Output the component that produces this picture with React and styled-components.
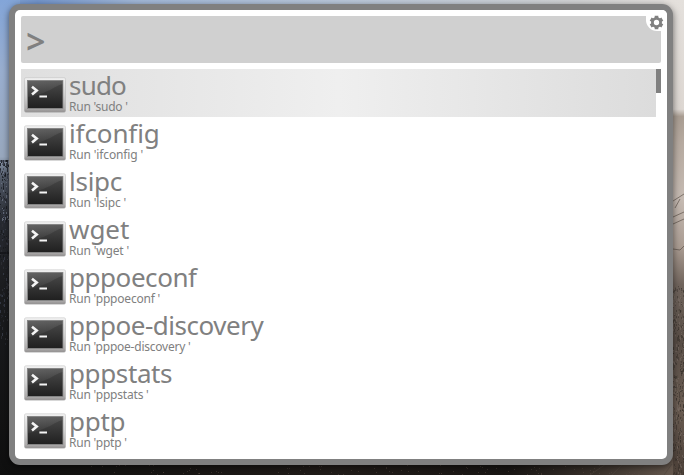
import React from "react";
import styled, { createGlobalStyle } from "styled-components";

const Global = createGlobalStyle`
  * { box-sizing: border-box; }
  body { margin: 0; overflow: hidden; font-family: "Noto Sans", sans-serif; color: #808080; }
`;

const Desktop = styled.main`
  position: relative;
  width: 684px;
  height: 475px;
  padding: 4px 11px 10px 9px;
  overflow: hidden;
  background: #151413;
`;

const Wallpaper = styled.svg`
  position: absolute;
  inset: 0;
`;

const Launcher = styled.section`
  position: relative;
  height: 461px;
  padding: 6px;
  border-radius: 11px;
  background: #808080;
  box-shadow: 0 2px 7px rgba(0, 0, 0, 0.55);
`;

const Inner = styled.div`
  height: 449px;
  padding: 6px;
  border-radius: 5px;
  background: #fff;
`;

const Prompt = styled.div`
  height: 47px;
  padding-left: 5px;
  border-radius: 2px;
  background: #d0d0d0;
  font-size: 34px;
  font-weight: 600;
  line-height: 51px;
`;

const Settings = styled.button`
  position: absolute;
  top: 6px;
  right: 6px;
  width: 21px;
  height: 21px;
  padding: 0;
  border: 0;
  border-radius: 5px 5px 5px 11px;
  background: #fff;

  svg {
    display: block;
    margin: 3px 0 0 3px;
  }
`;

const Results = styled.div`
  display: flex;
  margin-top: 6px;
`;

const List = styled.ul`
  flex: 1;
  margin: 0;
  padding: 0;
  list-style: none;
`;

const Thumb = styled.div`
  width: 5px;
  height: 24px;
  background: #808080;
`;

const Row = styled.li`
  display: flex;
  height: 48px;
  padding-left: 3px;
  background: ${(p) => (p.$active ? "linear-gradient(90deg, #dfdfdf, #efefef 50%, #dcdcdc)" : "transparent")};
`;

const Icon = styled.svg`
  flex: none;
  width: 42px;
  height: 37px;
  margin: 8px 3px 0 0;
`;

const IconDefs = styled.svg`
  display: block;
  width: 0;
  height: 0;
`;

const Labels = styled.div`
  white-space: pre;
`;

const Title = styled.div`
  height: 31px;
  font-size: 26px;
  line-height: 33px;
  letter-spacing: ${(p) => p.$track}px;
`;

const Subtitle = styled.div`
  font-size: 12px;
  line-height: 14px;
  letter-spacing: ${(p) => p.$track}px;
`;

const commands = [
  { name: "sudo", track: -0.8, subTrack: -0.25 },
  { name: "ifconfig", track: -0.12, subTrack: -0.15 },
  { name: "lsipc", track: -0.25, subTrack: -0.17 },
  { name: "wget", track: -0.05, subTrack: -0.17 },
  { name: "pppoeconf", track: -0.45, subTrack: -0.2 },
  { name: "pppoe-discovery", track: -0.48, subTrack: -0.23 },
  { name: "pppstats", track: -0.38, subTrack: -0.2 },
  { name: "pptp", track: -0.3, subTrack: -0.2 },
];

// Repeatable pseudo-random values for the foliage speckle.
const noise = (n) => {
  const v = Math.sin(n * 127.1) * 43758.5453;
  return v - Math.floor(v);
};

const range = (n) => Array.from({ length: n }, (_, i) => i);

const leftTints = ["#737b8c", "#3c4250", "#17191e", "#252830"];
const rightTints = ["#857970", "#332d29", "#51483f", "#28231f"];

function Backdrop() {
  return (
    <Wallpaper width="684" height="475" viewBox="0 0 684 475" aria-hidden="true">
      <defs>
        <linearGradient id="sky">
          <stop offset="0" stopColor="#83a5d8" />
          <stop offset="0.055" stopColor="#7395cc" />
          <stop offset="0.2" stopColor="#a2b8d8" />
          <stop offset="0.5" stopColor="#bac8da" />
          <stop offset="0.85" stopColor="#d3d4d5" />
          <stop offset="1" stopColor="#e5e1dd" />
        </linearGradient>
        <linearGradient id="left" x2="0" y2="1">
          <stop offset="0" stopColor="#83a5d8" />
          <stop offset="0.15" stopColor="#9aafd0" />
          <stop offset="0.33" stopColor="#99a9bf" />
          <stop offset="0.37" stopColor="#555d6b" />
          <stop offset="0.46" stopColor="#292c33" />
          <stop offset="0.6" stopColor="#1c1d20" />
          <stop offset="1" stopColor="#0f0f0f" />
        </linearGradient>
        <linearGradient id="right" x2="0" y2="1">
          <stop offset="0" stopColor="#e4e0dc" />
          <stop offset="0.23" stopColor="#ddd7d2" />
          <stop offset="0.245" stopColor="#a99d92" />
          <stop offset="0.3" stopColor="#b6aaa0" />
          <stop offset="0.42" stopColor="#c5bab2" />
          <stop offset="0.52" stopColor="#aa9c92" />
          <stop offset="0.6" stopColor="#70645c" />
          <stop offset="0.72" stopColor="#594e47" />
          <stop offset="0.85" stopColor="#6b5d53" />
          <stop offset="1" stopColor="#4c4038" />
        </linearGradient>
        <linearGradient id="ground">
          <stop offset="0" stopColor="#10100f" />
          <stop offset="0.5" stopColor="#211c19" />
          <stop offset="0.75" stopColor="#191614" />
          <stop offset="0.88" stopColor="#38302a" />
          <stop offset="1" stopColor="#65584e" />
        </linearGradient>
      </defs>
      <rect width="684" height="20" fill="url(#sky)" />
      <rect width="20" height="475" fill="url(#left)" />
      <rect x="664" width="20" height="475" fill="url(#right)" />
      <rect x="10" y="455" width="663" height="20" fill="url(#ground)" />
      {range(260).map((i) => (
        <rect
          key={`l${i}`}
          x={Math.floor(noise(i) * 9)}
          y={160 + Math.floor(noise(i + 500) ** 1.6 * 190)}
          width="1"
          height={1 + (i % 3)}
          fill={i % 4 === 0 && noise(i + 500) > 0.5 ? "#303238" : leftTints[i % 4]}
          opacity="0.75"
        />
      ))}
      {range(420).map((i) => (
        <rect
          key={`r${i}`}
          x={673 + Math.floor(noise(i + 900) * 11)}
          y={285 + Math.floor(noise(i + 1500) * 190)}
          width="1"
          height={1 + (i % 3)}
          fill={rightTints[i % 4]}
          opacity="0.4"
        />
      ))}
      {range(100).map((i) => (
        <rect
          key={`g${i}`}
          x={90 + Math.floor(noise(i + 2500) * 580)}
          y={465 + Math.floor(noise(i + 3100) * 10)}
          width="1"
          height="1"
          fill="#5a4c43"
          opacity="0.5"
        />
      ))}
      <path
        d="M673 201 684 194M673 217 684 212M673 224 684 219M673 249 680 250 684 246M675 208 680 199M590 475 606 464M612 475 623 464M635 475 645 464M664 475 672 464"
        fill="none"
        stroke="#51463e"
        strokeWidth="0.8"
        opacity="0.75"
      />
      <path d="M0 253H9" stroke="#0c0d10" />
    </Wallpaper>
  );
}

function IconPaint() {
  return (
    <IconDefs aria-hidden="true">
      <defs>
        <linearGradient id="bezel" x2="0" y2="1">
          <stop offset="0" stopColor="#f1f1f1" />
          <stop offset="0.5" stopColor="#d2d2d2" />
          <stop offset="0.9" stopColor="#adabab" />
          <stop offset="1" stopColor="#929090" />
        </linearGradient>
        <linearGradient id="screen" x2="0" y2="1">
          <stop offset="0" stopColor="#4a4a4a" />
          <stop offset="1" stopColor="#202020" />
        </linearGradient>
        <linearGradient id="gloss" x2="0.4" y2="1">
          <stop offset="0" stopColor="#fff" stopOpacity="0.14" />
          <stop offset="1" stopColor="#fff" stopOpacity="0.03" />
        </linearGradient>
      </defs>
    </IconDefs>
  );
}

function TerminalIcon() {
  return (
    <Icon viewBox="0 0 42 37" aria-hidden="true">
      <rect x="0.5" y="2" width="41" height="34" rx="2" fill="#000" opacity="0.12" />
      <rect x="0.5" y="0.7" width="41" height="34.3" rx="1.5" fill="url(#bezel)" stroke="#a5a5a5" strokeOpacity="0.45" strokeWidth="0.7" />
      <rect x="3" y="3" width="36.3" height="29" fill="#858585" />
      <rect x="4" y="4" width="34.5" height="27" fill="url(#screen)" />
      <path d="M4 4H38.5V7C30 9 24 17 4 20Z" fill="url(#gloss)" />
      <path d="M8 9.8 12.7 13.6 8 17.4" fill="none" stroke="#f4f4f4" strokeWidth="2.6" />
      <path d="M15.4 19.5H23" stroke="#f4f4f4" strokeWidth="2" />
    </Icon>
  );
}

function GearIcon() {
  return (
    <svg width="15" height="15" viewBox="0 0 14 14" aria-hidden="true">
      <g stroke="#808080" strokeWidth="3.4">
        <path d="M7 0.7V13.3" />
        <path d="M7 0.7V13.3" transform="rotate(60 7 7)" />
        <path d="M7 0.7V13.3" transform="rotate(120 7 7)" />
      </g>
      <circle cx="7" cy="7" r="3.8" fill="#fff" stroke="#808080" strokeWidth="2.6" />
    </svg>
  );
}

export default function App() {
  return (
    <Desktop>
      <Global />
      <Backdrop />
      <IconPaint />
      <Launcher>
        <Inner>
          <Prompt>&gt;</Prompt>
          <Results>
            <List>
              {commands.map(({ name, track, subTrack }, i) => (
                <Row key={name} $active={i === 0}>
                  <TerminalIcon />
                  <Labels>
                    <Title $track={track}>{name}</Title>
                    <Subtitle $track={subTrack}>{`Run '${name} '`}</Subtitle>
                  </Labels>
                </Row>
              ))}
            </List>
            <Thumb />
          </Results>
        </Inner>
        <Settings aria-label="Settings">
          <GearIcon />
        </Settings>
      </Launcher>
    </Desktop>
  );
}
